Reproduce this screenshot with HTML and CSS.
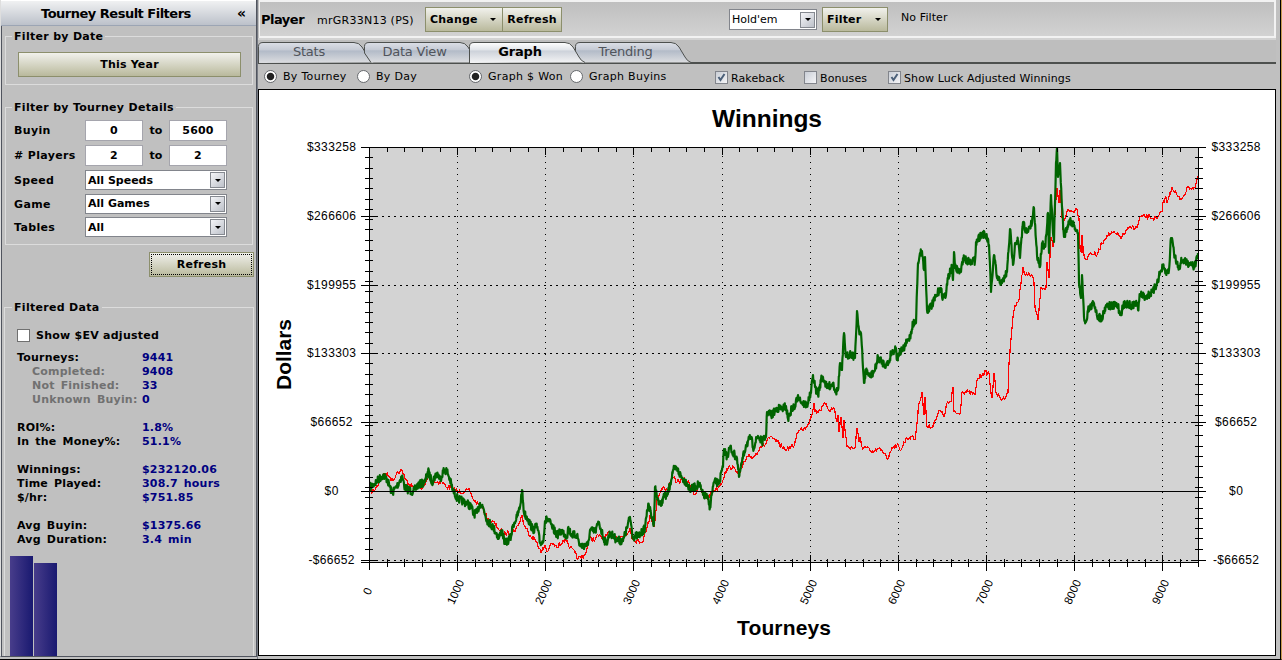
FILE: index.html
```html
<!DOCTYPE html>
<html lang="en">
<head>
  <meta charset="UTF-8">
  <title>Tourney Results</title>
  <link rel="stylesheet" href="styles.css">
</head>
<body>
  <aside class="sidebar">
    <div class="sidebar-header"><span class="title">Tourney Result Filters</span><span class="collapse">«</span></div>

    <fieldset class="group date-group">
      <legend>Filter by Date</legend>
      <button class="btn wide">This Year</button>
    </fieldset>

    <fieldset class="group details-group">
      <legend>Filter by Tourney Details</legend>
      <div class="row"><label>Buyin</label><span class="num">0</span><span class="to">to</span><span class="num">5600</span></div>
      <div class="row"><label>#&nbsp;Players</label><span class="num">2</span><span class="to">to</span><span class="num">2</span></div>
      <div class="row speed"><label>Speed</label><span class="combo">All Speeds<i class="drop"></i></span></div>
      <div class="row game"><label>Game</label><span class="combo">All Games<i class="drop"></i></span></div>
      <div class="row tables"><label>Tables</label><span class="combo">All<i class="drop"></i></span></div>
    </fieldset>

    <button class="btn refresh focused">Refresh</button>

    <fieldset class="group data-group">
      <legend>Filtered Data</legend>
      <div class="ev"><span class="box"></span>Show $EV adjusted</div>
      <dl class="stats">
        <dt>Tourneys:</dt><dd>9441</dd>
        <dt class="sub">Completed:</dt><dd>9408</dd>
        <dt class="sub">Not Finished:</dt><dd>33</dd>
        <dt class="sub">Unknown Buyin:</dt><dd>0</dd>
        <dt class="gap">ROI%:</dt><dd class="gap">1.8%</dd>
        <dt>In the Money%:</dt><dd>51.1%</dd>
        <dt class="gap">Winnings:</dt><dd class="gap">$232120.06</dd>
        <dt>Time Played:</dt><dd>308.7 hours</dd>
        <dt>$/hr:</dt><dd>$751.85</dd>
        <dt class="gap">Avg Buyin:</dt><dd class="gap">$1375.66</dd>
        <dt>Avg Duration:</dt><dd>3.4 min</dd>
      </dl>
      <div class="bars"><span class="bar tall"></span><span class="bar short"></span></div>
    </fieldset>
  </aside>

  <main class="main">
    <header class="toolbar">
      <b class="player">Player</b>
      <span class="name">mrGR33N13 (PS)</span>
      <button class="btn change">Change<i class="arrow"></i></button>
      <button class="btn reload">Refresh</button>
      <span class="combo game-type">Hold'em<i class="drop"></i></span>
      <button class="btn filter">Filter<i class="arrow"></i></button>
      <span class="no-filter">No Filter</span>
    </header>

    <nav class="tabs">
      <svg class="defs" width="0" height="0">
        <linearGradient id="tab" x1="0" y1="0" x2="0" y2="1">
          <stop offset="0" stop-color="#dcdfe6"/><stop offset=".35" stop-color="#c6cbd5"/>
          <stop offset=".42" stop-color="#b3bbc8"/><stop offset="1" stop-color="#dcdde0"/>
        </linearGradient>
        <linearGradient id="tab-on" x1="0" y1="0" x2="0" y2="1">
          <stop offset="0" stop-color="#fff"/><stop offset=".35" stop-color="#e2e5ea"/>
          <stop offset=".42" stop-color="#cdd2da"/><stop offset="1" stop-color="#f4f4f5"/>
        </linearGradient>
      </svg>
      <div class="tab"><svg viewBox="0 0 116 21"><path fill="url(#tab)" d="M.5 21V4.5Q.5.5 5 .5H96Q101 .5 104 5L110 15Q112 19 116 20.5"/></svg><span>Stats</span></div>
      <div class="tab"><svg viewBox="0 0 116 21"><path fill="url(#tab)" d="M7 20.5L.5 11V4.5Q.5.5 5 .5H96Q101 .5 104 5L110 15Q112 19 116 20.5"/></svg><span>Data View</span></div>
      <div class="tab active"><svg viewBox="0 0 116 21"><path fill="url(#tab-on)" d="M.5 21V4.5Q.5.5 5 .5H96Q101 .5 104 5L110 15Q112 19 116 20.5"/></svg><span>Graph</span></div>
      <div class="tab"><svg viewBox="0 0 116 21"><path fill="url(#tab)" d="M7 20.5L.5 11V4.5Q.5.5 5 .5H96Q101 .5 104 5L110 15Q112 19 116 20.5"/></svg><span>Trending</span></div>
    </nav>

    <div class="options">
      <span class="radio on"></span><span class="opt by-tourney">By Tourney</span>
      <span class="radio"></span><span class="opt by-day">By Day</span>
      <span class="radio on"></span><span class="opt won">Graph $ Won</span>
      <span class="radio"></span><span class="opt buyins">Graph Buyins</span>
      <span class="check"><svg viewBox="0 0 11 11"><path d="M2.5 5L4.5 8L8.5 2"/></svg></span><span class="opt small rakeback">Rakeback</span>
      <span class="check"></span><span class="opt small bonuses">Bonuses</span>
      <span class="check"><svg viewBox="0 0 11 11"><path d="M2.5 5L4.5 8L8.5 2"/></svg></span><span class="opt small luck">Show Luck Adjusted Winnings</span>
    </div>

    <div class="chart">
      <svg id="chart" viewBox="259 90 1016 565" width="1016" height="565">
        <rect class="plot" x="369" y="147" width="829" height="415"/>
        <g id="grid"></g>
        <polyline id="luck"/>
        <polyline id="won"/>
        <path class="axis" d="M361 147.5H1206M369.5 147V570M1198.5 147V567M361 562.5H1199"/>
        <g id="ticks"></g>
        <g id="labels"></g>
        <text class="heading" x="767" y="127" textLength="110">Winnings</text>
        <text class="caption" x="784" y="635" textLength="94">Tourneys</text>
        <text class="caption" transform="translate(291 354.5) rotate(-90)" textLength="71">Dollars</text>
      </svg>
    </div>
  </main>

  <script src="chart.js"></script>
</body>
</html>
```

FILE: styles.css
```css
* {
  box-sizing: border-box;
}

body {
  margin: 0;
  width: 1282px;
  height: 660px;
  overflow: hidden;
  display: flex;
  background: #c0c0c0;
  font: 11px "DejaVu Sans", Verdana, sans-serif;
  color: #000;
  border-right: 1px solid #c89b50;
  border-bottom: 1px solid #000;
}

/* sidebar */
.sidebar {
  width: 257px;
  height: 657px;
  flex: none;
  overflow: hidden;
  border-left: 1px solid #dedede;
  border-right: 1px solid #50545e;
  border-bottom: 1px solid #50545e;
  box-shadow: inset 1px 0 #50545e;
  font-weight: bold;
}

.sidebar-header {
  height: 26px;
  display: flex;
  align-items: center;
  background: linear-gradient(#f0f1f2, #bcc1ca);
  border-top: 1px solid #fff;
  border-bottom: 1px solid #9ca5b4;
  font-size: 13px;
}

.sidebar-header .title {
  width: 236px;
  padding-left: 40px;
  white-space: nowrap;
  letter-spacing: -0.5px;
}

.collapse {
  font-size: 14px;
  line-height: 18px;
}

.group {
  min-width: 0;
  margin: 0 3px 0 4px;
  padding: 0;
  border: 1px solid #dcdcdc;
}

.group legend {
  height: 14px;
  line-height: 15px;
  margin-left: 6px;
  padding: 0 2px;
  letter-spacing: 0.3px;
}

.date-group {
  height: 56px;
  margin-top: 3px;
}

.btn {
  display: flex;
  align-items: center;
  justify-content: center;
  height: 25px;
  padding: 0;
  border: 1px solid #8c8f6c;
  background: linear-gradient(#f1f1ec, #b9b99c);
  font: bold 11px "DejaVu Sans", Verdana, sans-serif;
  letter-spacing: 0.2px;
  color: #000;
}

.btn.wide {
  width: 223px;
  margin: 9px 0 0 12px;
}

.details-group {
  height: 145px;
  margin-top: 15px;
}

.row {
  display: flex;
  align-items: center;
  height: 25px;
  padding-left: 8px;
}

.row:first-of-type {
  margin-top: 4px;
}

.row label {
  width: 71px;
  letter-spacing: 0.35px;
}

.num {
  width: 58px;
  height: 21px;
  line-height: 19px;
  border: 1px solid #a5a5ad;
  background: #fff;
  text-align: center;
  letter-spacing: 0.2px;
}

.to {
  width: 26px;
  text-align: center;
}

.combo {
  display: flex;
  justify-content: space-between;
  align-items: center;
  width: 142px;
  height: 20px;
  padding: 0 1px 0 2px;
  border: 1px solid #82858c;
  background: #fff;
}

.row .combo {
  margin-top: -1px;
}

.drop {
  display: flex;
  align-items: center;
  justify-content: center;
  width: 15px;
  height: 16px;
  border: 1px solid #858990;
  background: linear-gradient(135deg, #f4f5f8, #bdc1c9);
}

.drop::before,
.arrow {
  content: "";
  border: 3px solid transparent;
  border-top-color: #000;
  border-bottom: 0;
}

.row.game {
  height: 22px;
}

.refresh {
  width: 105px;
  margin: 7px 0 0 148px;
}

.focused {
  outline: 1px dotted #000;
  outline-offset: -3px;
}

.data-group {
  height: 370px;
  margin: 23px 2px 0 3px;
}

.data-group legend {
  margin-left: 7px;
}

.ev {
  display: flex;
  align-items: center;
  height: 14px;
  margin: 14px 0 0 12px;
  gap: 6px;
  letter-spacing: 0.25px;
}

.box {
  width: 13px;
  height: 13px;
  border: 1px solid #707070;
  background: #fff;
}

.stats {
  display: grid;
  grid-template-columns: 125px 1fr;
  grid-auto-rows: min-content;
  margin: 9px 0 0 12px;
  line-height: 14px;
  letter-spacing: 0.2px;
  word-spacing: 2px;
  white-space: nowrap;
}

.stats dd {
  margin: 0;
  color: #000080;
}

.stats .sub {
  padding-left: 15px;
  color: #717171;
}

.stats .gap {
  padding-top: 14px;
}

.bars {
  display: flex;
  align-items: flex-end;
  gap: 1px;
  height: 101px;
  margin: 9px 0 0 5px;
}

.bar {
  width: 23px;
  background: linear-gradient(90deg, #483d8b, #191970);
}

.bar.tall {
  height: 101px;
}

.bar.short {
  height: 94px;
}

/* main area */
.main {
  flex: 1;
  padding-left: 1px;
  border-left: 1px solid #777b83;
  border-right: 1px solid #000;
}

.toolbar {
  display: flex;
  height: 38px;
  margin-right: 4px;
  padding: 5px 0 0 1px;
  border: 2px solid #f2f2f2;
  border-width: 2px 2px 2px 1px;
  background: linear-gradient(#bfbfbf, #d2d2d2);
}

.player {
  width: 56px;
  padding-top: 5px;
  font-size: 13px;
  letter-spacing: -0.5px;
}

.name {
  width: 108px;
  padding-top: 7px;
  letter-spacing: 0.25px;
  white-space: nowrap;
}

.btn.change {
  width: 78px;
  justify-content: space-between;
  padding: 0 6px 0 4px;
}

.btn.reload {
  width: 60px;
  margin-left: -1px;
}

.game-type {
  width: 88px;
  height: 21px;
  margin: 2px 5px 0 167px;
}

.btn.filter {
  width: 66px;
  justify-content: space-between;
  padding: 0 6px 0 4px;
}

.no-filter {
  padding: 4px 0 0 13px;
  letter-spacing: 0.1px;
}

.tabs {
  display: flex;
  height: 26px;
  padding-top: 2px;
  margin-left: -1px;
  margin-right: 4px;
  border-top: 2px solid #d3d3d3;
  border-bottom: 2px solid #4d504e;
  background: #bebebe;
}

.defs {
  position: absolute;
}

.tab {
  position: relative;
  width: 105.5px;
  height: 20px;
  font-size: 13px;
  line-height: 19px;
  letter-spacing: -0.2px;
  color: #50545c;
}

.tab svg {
  position: absolute;
  left: 0;
  top: 0;
  width: 116px;
  height: 21px;
}

.tab path {
  stroke: #4d504e;
}

.tab span {
  position: relative;
  display: block;
  width: 102px;
  text-align: center;
}

.tab.active {
  z-index: 1;
  font-weight: bold;
  color: #000;
}

.options {
  display: flex;
  align-items: center;
  height: 25px;
  padding: 0 0 0 5px;
}

.radio {
  width: 13px;
  height: 13px;
  border: 1px solid #66696d;
  border-radius: 50%;
  background: #fff;
}

.radio.on {
  background: radial-gradient(circle, #222 3.3px, #fff 4.2px);
}

.opt {
  padding-left: 6px;
  letter-spacing: 0.3px;
  white-space: nowrap;
}

.by-tourney {
  width: 80px;
}

.by-day {
  width: 99px;
}

.won {
  width: 88px;
}

.buyins {
  width: 132px;
}

.check {
  width: 13px;
  height: 13px;
  margin-top: 2px;
  border: 1px solid #82858c;
  background: linear-gradient(135deg, #c9ced6, #f5f5f7);
}

.check svg {
  display: block;
}

.check path {
  fill: none;
  stroke: #4b6079;
  stroke-width: 2;
}

.opt.small {
  padding: 4px 0 0 3px;
  letter-spacing: 0.1px;
}

.rakeback {
  width: 76px;
}

.bonuses {
  width: 71px;
}

.chart {
  width: 1018px;
  height: 567px;
  margin-left: -1px;
  border: 1px solid #000;
  background: #fff;
}

.chart svg {
  display: block;
}

.plot {
  fill: #d3d3d3;
}

.axis,
#ticks path,
#grid path {
  fill: none;
  stroke: #000;
  shape-rendering: crispEdges;
}

#grid .horizontal {
  stroke-dasharray: 2 4;
}

#grid .vertical {
  stroke-dasharray: 1 5;
}

#luck,
#won {
  fill: none;
  stroke-linejoin: round;
}

#luck {
  stroke: #f00;
  stroke-width: 1.2;
  shape-rendering: crispEdges;
}

#won {
  stroke: #006400;
  stroke-width: 2.2;
}

#chart text {
  font-family: "Liberation Sans", Arial, sans-serif;
  font-size: 12px;
  text-anchor: middle;
}

#chart .count {
  font-size: 11.5px;
  text-anchor: end;
}

#chart .heading {
  font-size: 24.5px;
  font-weight: bold;
}

#chart .caption {
  font-size: 21px;
  font-weight: bold;
}
```

FILE: chart.js
```js
const won = `370,487 373,485 377,481 383,475 387,479 392,493 397,486 402,476 405,488 413,492 418,485 425,482 428,471 432,482
437,473 440,479 444,470 447,471 450,480 453,491 458,499 467,503 472,508 473,514 477,513 480,503 483,507 487,520 493,527
499,538 502,530 505,544 511,537 513,525 517,517 520,507 522,490 524,513 528,519 533,530 537,526 540,543 543,542 545,521
548,519 552,527 557,535 562,531 567,537 568,528 572,535 577,535 580,546 588,545 590,530 595,532 599,522 601,530 606,544
610,533 617,540 623,541 627,528 630,517 633,537 640,535 645,528 647,510 649,506 652,518 654,523 655,487 657,497 661,506
663,497 667,496 670,485 673,470 677,469 682,478 687,483 690,490 695,487 699,484 703,495 707,497 710,507 712,493 714,482
719,483 723,467 724,449 727,457 730,447 733,453 737,458 739,477 742,462 746,445 751,437 753,448 758,436 762,442 766,437
767,412 772,415 777,408 782,409 786,406 788,419 792,408 795,407 798,395 802,403 807,405 811,393 813,375 815,387 818,395
821,380 823,377 827,388 833,383 836,392 838,390 840,363 842,370 844,333 846,357 851,353 855,358 857,311 859,330 861,333
863,368 864,383 866,370 870,377 875,370 878,357 882,362 886,365 889,362 891,353 896,348 897,360 899,353 903,350 907,342
910,337 913,323 916,323 917,290 918,263 920,253 922,251 924,270 925,257 927,310 932,305 937,295 940,288 943,297 946,295
948,277 952,268 953,280 954,252 955,268 961,272 963,258 968,261 975,261 976,242 982,233 987,238 989,245 991,292 994,255
997,278 1002,283 1007,272 1010,229 1013,265 1015,243 1018,240 1020,258 1023,222 1027,233 1032,223 1034,208 1036,240
1037,255 1040,267 1042,243 1045,247 1048,213 1049,253 1051,195 1053,233 1054,242 1056,163 1057,148 1058,177 1060,163
1062,207 1064,237 1067,227 1070,220 1074,225 1078,233 1079,283 1081,298 1082,275 1084,317 1086,322 1088,310 1094,303
1098,317 1102,318 1106,305 1113,306 1118,305 1120,315 1125,303 1132,306 1137,303 1138,310 1140,294 1145,297 1153,292
1157,283 1160,273 1163,267 1166,273 1169,270 1171,238 1172,238 1174,253 1177,263 1179,267 1182,260 1187,263 1192,263
1194,267 1196,262 1198,253`;

const luck = `370,492 375,490 380,480 385,473 389,476 393,481 397,472 402,470 405,479 412,487 420,488 425,485 428,478 435,482
442,482 447,487 453,488 458,492 465,491 470,491 473,499 478,504 483,508 488,520 493,522 498,528 503,533 507,533 513,532
518,526 522,515 524,525 530,535 537,542 541,553 545,545 547,552 552,543 557,548 563,540 567,540 570,548 575,553 578,559
585,555 590,538 595,540 598,535 602,539 610,533 615,537 623,537 628,533 630,528 633,540 642,542 647,528 650,515 654,527
657,500 660,493 664,487 667,490 673,477 677,482 682,480 687,481 690,485 695,495 699,485 703,495 708,498 713,490 718,488
723,480 725,472 730,467 735,469 740,473 743,465 748,457 754,457 760,447 765,445 768,438 774,439 777,442 782,447 787,449
794,446 797,433 800,430 806,427 812,415 814,403 815,412 820,410 826,403 829,410 834,408 837,422 838,415 839,432 841,417
843,438 844,420 847,447 855,448 857,428 859,442 860,437 862,447 867,448 872,453 878,449 885,453 888,459 892,447 897,445
900,450 907,438 912,437 915,440 917,423 919,403 922,392 924,415 925,397 927,427 932,427 935,420 940,410 944,417 947,403
951,402 953,387 954,412 960,414 962,392 968,392 975,395 977,380 983,373 989,373 991,393 992,398 994,373 996,393 1002,400
1008,393 1009,363 1011,339 1013,317 1015,305 1019,300 1021,283 1023,267 1025,275 1032,275 1034,283 1035,307 1038,320
1041,287 1046,288 1047,262 1049,278 1051,237 1053,247 1055,213 1057,188 1059,203 1060,190 1063,230 1064,220 1067,211
1073,211 1077,209 1079,218 1080,248 1082,253 1082,235 1084,255 1086,260 1090,253 1097,255 1102,243 1107,235 1113,233
1122,237 1127,230 1132,227 1137,228 1140,217 1150,217 1157,219 1162,212 1163,202 1166,197 1167,203 1172,187 1177,195
1180,200 1184,195 1188,187 1195,188 1198,176`;

// small repeatable swings between the recorded points
function wiggle(data, size, step) {
  let seed = 7;
  const random = () => {
    seed = (seed * 16807) % 2147483647;
    return seed / 2147483647 - 0.5;
  };
  const points = data.split(/\s+/).map(p => p.split(',').map(Number));
  const out = [];
  points.forEach(([x, y], i) => {
    out.push(`${x},${y}`);
    const next = points[i + 1];
    if (!next) return;
    const steps = Math.max(1, Math.round((next[0] - x) / step));
    for (let s = 1; s < steps; s++) {
      const t = s / steps;
      const py = y + (next[1] - y) * t + random() * size;
      out.push(`${(x + (next[0] - x) * t).toFixed(1)},${py.toFixed(1)}`);
    }
  });
  return out.join(' ');
}

document.getElementById('won').setAttribute('points', wiggle(won, 8, 0.4));
document.getElementById('luck').setAttribute('points', wiggle(luck, 5, 0.8));

let grid = '';
let ticks = '';
let labels = '';

// dollar axis, both sides
const amounts = ['$333258', '$266606', '$199955', '$133303', '$66652', '$0', '-$66652'];
const widths = [49, 49, 49, 49, 42, 14, 46];
amounts.forEach((amount, i) => {
  const y = Math.round(147 + i * 68.8) + 0.5;
  if (amount === '$0') {
    ticks += `M361 ${y}H1206`;
  } else if (i > 0) {
    grid += `<path class="horizontal" d="M376 ${y}H1192"/>`;
    ticks += `M361 ${y}H377M1191 ${y}H1206`;
  }
  labels += `<text x="331.5" y="${y + 3.5}" textLength="${widths[i]}">${amount}</text>`;
  labels += `<text x="1236" y="${y + 3.5}" textLength="${widths[i]}">${amount}</text>`;
});
for (let i = 1; i < 40; i++) {
  const y = Math.round(147 + i * 10.3) + 0.5;
  ticks += `M365 ${y}H373M1195 ${y}H1203`;
}

// tourney axis
for (let i = 0; i <= 47; i++) {
  const x = Math.round(369 + i * 17.63) + 0.5;
  const end = i ? 582 : 590;
  if (i % 5) {
    ticks += `M${x} 147V152M${x} 559V567`;
    continue;
  }
  if (i) {
    grid += `<path class="vertical" d="M${x} 156V554"/>`;
    ticks += `M${x} 147V155M${x} 555V571`;
  }
  labels += `<text class="count" transform="translate(${x + (i ? 7 : 3)} ${end}) rotate(-65)">${i * 200}</text>`;
}

document.getElementById('grid').innerHTML = grid;
document.getElementById('ticks').innerHTML = `<path d="${ticks}"/>`;
document.getElementById('labels').innerHTML = labels;
```
